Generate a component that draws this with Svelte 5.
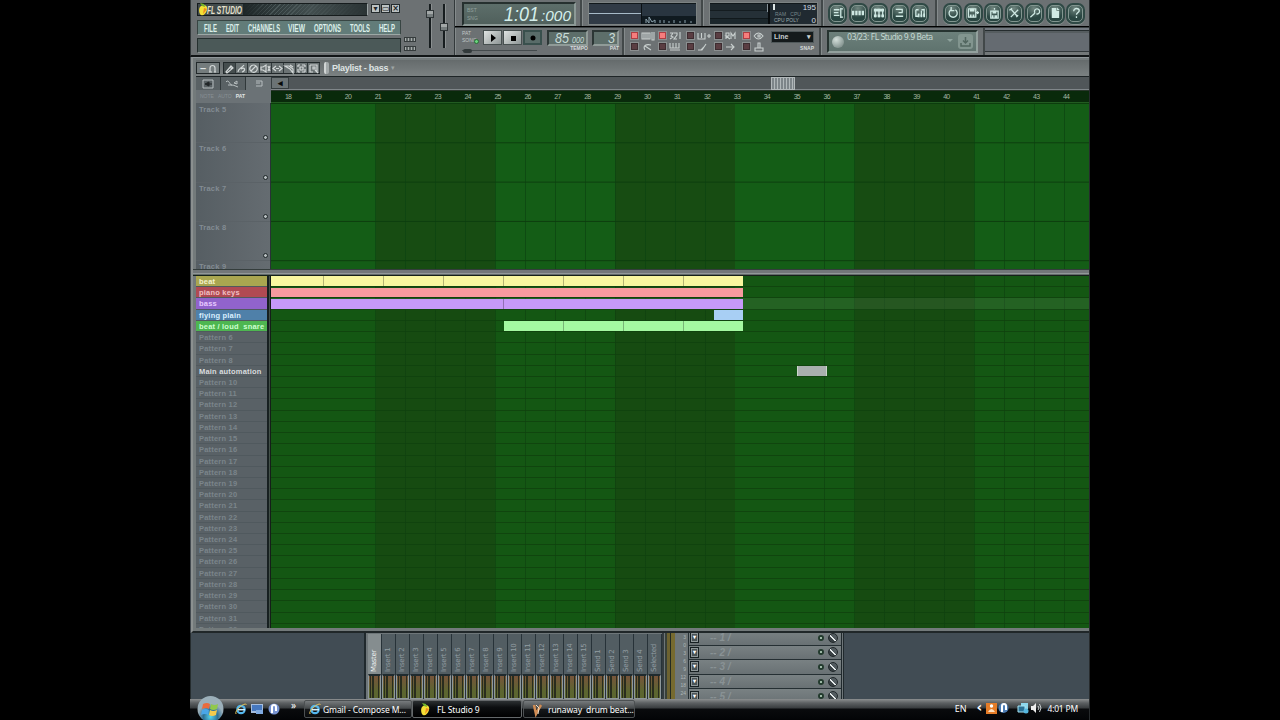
<script>
  const viewIcons = [
    ['M2 3h6M2 6h5M2 9h6M9.500 1v11M10 2h2M10 11h2', ''],
    ['', 'M0 4h2.500v5H0zM3.500 4H6v5H3.500zM7 4h2.500v5H7zM10.500 4H13v5h-2.500z'],
    ['M2.500 2v9M6.500 2v9M10.500 2v9', 'M1 2h11v3H1zM1 8h3v3H1zM5 8h3v3H5zM9 8h3v3H9z'],
    ['M3 2.500h7M6 6h4.500M3 10h8M10 2v4', ''],
    ['M2 3v7h3M5 3H2M8 4v6M11 2v8M8 3h3', 'M4 7h2v4H4zM7 8h2v3H7zM10 7h2v4h-2z']
  ];
  const actionIcons = [
    ['M4 3.200a4.400 4.400 0 1 0 5-.2M4.500 0v4H8', ''],
    ['M1.500 2h8v9h-8zM10 6h3M11.500 4.500v3', 'M3 2h5v3H3zM3 8h2v3H3zM6 8h2v3H6z'],
    ['M3 4.500h8v7.500H3zM7 1v2', 'M5 4h4v3H5zM4 9h2v3H4zM7 9h3v3H7z'],
    ['M3 2l7 8M3 11l8-8M1.500 3.500l3-2M9 11l2-2', ''],
    ['M6.500 6.500a2.800 2.800 0 1 1 1.500 1M6.500 6.500L1.500 11', ''],
    ['', 'M3 1h5v3h3v8H3zM8.700 0.500L11.500 3.300H8.700z'],
    ['M4 4.500c0-4 6-3.500 6-.5 0 2-3 2-3 4.500M7 10v2', '']
  ];
  const toolIcons = [
    'M2 9l5-6 2 2-6 5zM6 4l2 2',
    'M2 9c0-4 3-3 6-7M5 6c4-3 5 2 1 3',
    'M5.5 2a3.7 3.7 0 1 0 .1 0M3 8l5-5',
    'M1 4h2l3-2v7L3 7H1zM8 3l2 5M10 3L8 8',
    'M4 3L1 5.5 4 8M7 3l3 2.500L7 8M4 5.500h3',
    'M1 3h4l4 3v4L6 6zM6 2l3 2',
    'M2 2h2M6 2h3M2 9h2M6 9h3M2 2v2M2 6v3M9 2v2M9 6v3M4 4h3v3H4z',
    'M2 2h7v7M2 2v7h3M5 4h2v2H5zM7 7l3 3'
  ];
  const toggles = [
    [['1', 'M1 2h8v6H1zM3 2v6M5 2v6M7 2v6M11 1v8h2V1'], ['0', 'M4 8c-3-5 2-6 6-5M4 4l6 4']],
    [['1', 'M1 2h3L2 5l2 1-3 2M5 2h3v2L5 8h3M11 1v7'], ['0', 'M1 1v5h9V1M4 1v5M7 1v5M1 8h10']],
    [['0', 'M1 2v6h7V2M4.500 2v5M10 5h4M12 3v4'], ['0', 'M1 8h4l4-6M4 8l3-3']],
    [['0', 'M1 8V2h3v3L1 5l4 3M6 8V2l2 3 2-3v6'], ['0', 'M1 5h8M6 2l3 3-3 3']],
    [['1', 'M1 5c3-4 6-4 9 0-3 4-6 4-9 0M5 4h2v2H5z'], ['0', 'M5 1h2v5H5zM2 6h8v3H2z']]
  ];
  const bars = Array.from({ length: 27 }, (_, i) => i + 18);
  const tracks = [5, 6, 7, 8, 9];
  const named = {
    1: ['beat', '#a9a650', '#f4f3cd'],
    2: ['piano keys', '#b04a53', '#f0c0c4'],
    3: ['bass', '#9163cc', '#e7caff'],
    4: ['flying plain', '#4f80a9', '#d9efff'],
    5: ['beat / loud  snare', '#4eb651', '#cdffd0'],
    9: ['Main automation', '', '#d8dcdf']
  };
  const clips = {
    1: { start: 0, color: '#f8f79f', parts: [53, 60, 60, 60, 60, 60, 60, 59] },
    2: { start: 0, color: '#f89a9f', parts: [472] },
    3: { start: 0, color: '#c699f9', parts: [233, 239] },
    4: { start: 443, color: '#a8cff4', parts: [29] },
    5: { start: 233, color: '#a4f9a1', parts: [60, 60, 60, 59] },
    9: { start: 526, color: '#a9b0ae', parts: [30] }
  };
  const patterns = Array.from({ length: 32 }, (_, i) => i + 1);
  const strips = ['Master', ...Array.from({ length: 15 }, (_, i) => `Insert ${i + 1}`), 'Send 1', 'Send 2', 'Send 3', 'Send 4', 'Selected'];
</script>

{#snippet stretched(text, w, h, size, slant = false, weight = 400)}
  <svg class="st" width={w} height={h} viewBox="0 0 {w} {h}">
    <text x="0" y={h - 1} font-size={size} font-weight={weight} font-style={slant ? 'italic' : 'normal'} textLength={w - 1} lengthAdjust="spacingAndGlyphs">{text}</text>
  </svg>
{/snippet}

{#snippet ie()}
  <svg width="12" height="12" viewBox="0 0 12 12"><circle cx="6" cy="6.500" r="3.700" fill="none" stroke="#54b7ef" stroke-width="2.200" /><path d="M3 6.700h7" stroke="#d6f1ff" stroke-width="1.500" /><path d="M1 11C-1 8 9-1 11.500 1.500" fill="none" stroke="#e7c557" /></svg>
{/snippet}

{#snippet fruit()}
  <svg width="11" height="13" viewBox="0 0 11 13"><path d="M3 3c4-2 7 0 6 4-1 4-4 6-6 5S0 5 3 3z" fill="#f4df35" /><path d="M4 3L2 0l4 1 1 3z" fill="#72b52c" /><path d="M6 5l3 1-4 5z" fill="#f08a20" /></svg>
{/snippet}

<div class="screen">
  <header class="toolbar">
    <section class="main-panel">
      <div class="title-row">
        <div class="title">{@render fruit()}{@render stretched('FL STUDIO', 36, 10, 11.5, true, 700)}<i></i></div>
        <div class="win"><b>▾</b><b>▭</b><b>×</b></div>
      </div>
      <nav>
        {#each [['FILE', 14], ['EDIT', 14], ['CHANNELS', 33], ['VIEW', 18], ['OPTIONS', 28], ['TOOLS', 21], ['HELP', 17]] as [m, w]}
          {@render stretched(m, w, 10, 10.5, false, 700)}
        {/each}
      </nav>
      <div class="hint"></div>
    </section>
    <section class="faders">
      <div class="mini"><b></b><b></b></div>
      <div class="fader f1"><i></i></div>
      <div class="fader f2"><i></i></div>
    </section>
    <section class="transport">
      <div class="row top">
        <div class="cell time"><div class="lcd"><span class="tiny">BST<br />SNG</span>{@render stretched('1:01', 36, 17, 20, true)}{@render stretched(':000', 31, 13, 15, true)}</div></div>
        <div class="cell scope"><div class="dark"><div class="wave"></div><div class="spec"><svg width="54" height="8"><path d="M4 7V3l3 4V1l3 5 3-2v3M18 7V4M22 7V4M27 7V5M32 7V4M38 7V5M43 7V4M49 7V5" stroke="#8ca2ad" fill="none" /></svg></div></div></div>
        <div class="cell cpu"><div class="dark"><div class="graph"></div><div class="nums"><p><i></i>195</p><p class="dim">RAM &nbsp; CPU</p><p><small>CPU POLY</small>0</p></div></div></div>
        <div class="cell round r5">
          {#each viewIcons as [s, f]}<span><svg width="13" height="13" viewBox="0 0 13 13"><path d={s} /><path class="solid" d={f} /></svg></span>{/each}
        </div>
        <div class="cell round r7">
          {#each actionIcons as [s, f]}<span><svg width="13" height="13" viewBox="0 0 13 13"><path d={s} /><path class="solid" d={f} /></svg></span>{/each}
        </div>
      </div>
      <div class="row">
        <div class="cell play">
          <div class="deck">
            <div class="buttons"><span class="mode">PAT <br />SONG<i></i></span><b><svg width="12" height="10"><path d="M4 1l5 4-5 4z" /></svg></b><b><svg width="12" height="10"><path d="M4 3h5v5H4z" /></svg></b><b class="rec"><svg width="12" height="10"><circle cx="6" cy="5" r="2.500" /></svg></b></div>
            <div class="pos"><i></i></div>
          </div>
          <div class="num bpm"><div>{@render stretched('85', 15, 12, 15, true)}{@render stretched('000', 13, 9, 9, true)}</div><em>TEMPO</em></div>
          <div class="num pat"><div>{@render stretched('3', 8, 12, 15, true)}</div><em>PAT</em></div>
        </div>
        <div class="cell options">
          {#each toggles as col}
            <div class="tcol">{#each col as [on, d]}<p><i class:on={on === '1'}></i><svg width="14" height="10"><path {d} /></svg></p>{/each}</div>
          {/each}
          <div class="snap"><div>Line<span>▾</span></div><em>SNAP</em></div>
        </div>
        <div class="cell news"><div><i class="globe"></i><span>03/23: FL Studio 9.9 Beta</span><u></u><svg width="15" height="15"><rect width="15" height="15" rx="3" fill="#82958f" /><path d="M7.500 3v6M5 6.500L7.500 9 10 6.500M3 9v3h9V9" stroke="#52665f" stroke-width="1.500" fill="none" /></svg></div></div>
        <div class="empty"></div>
      </div>
    </section>
  </header>

  <main class="playlist">
    <div class="caption">
      <div class="ctl"><span>–</span><svg width="11" height="11"><path d="M3 9V5a2.500 2.500 0 0 1 5 0v4M2 9h3M7 9h2" /></svg></div>
      <div class="tools">{#each toolIcons as d, i}<span class:sel={i === 0}><svg width="11" height="11"><path {d} /></svg></span>{/each}</div>
      <i class="grip"></i><strong>Playlist - bass</strong><small>▾</small>
    </div>
    <div class="nav">
      <div class="tabs"><span><svg width="12" height="10"><path d="M1 1h10v8H1z" fill="#dfe3e3" stroke="none" /><path d="M3 5l4-2v4zM7 5h3" style="stroke:#202527;fill:#202527" /></svg></span><span><svg width="16" height="10"><path d="M1 3c3-4 4 5 7 3l5 2M3 6h4M9 4l3-2v3z" /></svg></span><span class="act"><svg width="12" height="10"><path d="M3 2h6v5H3M3 4h4" /></svg></span></div>
      <div class="scroll"><b>◂</b><i></i></div>
    </div>
    <div class="ruler">
      <div class="corner"><span>NOTE</span><span>AUTO</span><b>PAT</b></div>
      <div class="bars">{#each bars as b}<span>{b}</span>{/each}</div>
    </div>
    <div class="tracks">
      <div class="heads">{#each tracks as t}<div>Track {t}<i></i></div>{/each}</div>
      <div class="grid big"></div>
    </div>
    <div class="splitter"></div>
    <div class="patterns">
      <div class="names">
        {#each patterns as p}
          <div style:background={named[p]?.[1]} style:color={named[p]?.[2]}>{named[p]?.[0] ?? `Pattern ${p}`}</div>
        {/each}
      </div>
      <div class="strip"></div>
      <div class="grid small">
        {#each patterns as p}
          <div class="prow" class:current={p === 3} class:outlined={p === 9} style:padding-left="{clips[p]?.start ?? 0}px">
            {#if clips[p]}{#each clips[p].parts as w}<i style:width="{w}px" style:background={clips[p].color}></i>{/each}{/if}
          </div>
        {/each}
      </div>
    </div>
  </main>

  <section class="desk">
    <div class="mixer">
      <div class="strips">
        {#each strips as s, i}<div class:master={i === 0}><span>{s}</span><i></i></div>{/each}
      </div>
      <div class="level"></div>
      <div class="scale">3<br />0<br />3<br />6<br />9<br />12<br />18<br />24</div>
      <div class="fx">
        {#each [1, 2, 3, 4, 5] as n}<div><b>▾</b><em>-- {n} /</em><u></u><i></i></div>{/each}
      </div>
    </div>
  </section>

  <footer>
    <div class="start"><svg width="27" height="23" viewBox="0 0 27 23"><defs><radialGradient id="orb" cy=".8"><stop offset="0" stop-color="#58d5ed" /><stop offset=".55" stop-color="#2c7097" /><stop offset="1" stop-color="#9bafb9" /></radialGradient></defs><circle cx="13.500" cy="13" r="13" fill="url(#orb)" /><path d="M6 8q4-2 7 0l-1 5q-3-2-7 0z" fill="#eb6b3c" /><path d="M14 8q3 2 7 0l-1 5q-4 2-7 0z" fill="#91c84b" /><path d="M5 14q4-2 7 0l-1 5q-3-2-7 0z" fill="#4aa6e8" /><path d="M13 14q3 2 7 0l-1 5q-4 2-7 0z" fill="#f4ca4c" /></svg></div>
    <div class="quick">{@render ie()}<svg width="13" height="12"><rect y="1" width="12" height="9" fill="#a5bddd" /><rect x="1" y="2" width="10" height="6" fill="#4678bf" /><path d="M5 7h7v4H5z" fill="#7faae1" /></svg><svg width="12" height="12"><circle cx="6" cy="6" r="5.500" fill="#7894d1" /><path d="M4 10V4a2 2 0 0 1 4 0v4" stroke="#fff" stroke-width="2" fill="none" /></svg></div>
    <span class="more">»</span>
    <div class="task">{@render ie()}<span>Gmail - Compose M...</span></div>
    <div class="task active">{@render fruit()}<span>FL Studio 9</span></div>
    <div class="task third"><svg width="11" height="13"><path d="M2 2l2 9 2-4 3-5" stroke="#d18c53" stroke-width="2.500" fill="none" /><path d="M4 2l3 3-1 6" stroke="#eee0c9" fill="none" /></svg><span>runaway&nbsp; drum beat...</span></div>
    <div class="tray"><span class="en">EN</span><span class="chev">‹</span><svg width="11" height="12"><rect width="11" height="11" y="1" fill="#e57c27" /><circle cx="5.500" cy="4" r="1.700" fill="#fff" /><path d="M2 10q3.500-6 7 0z" fill="#fde0c0" /></svg><svg class="nx" width="11" height="12"><circle cx="5.500" cy="6" r="5" fill="#4d7db4" /><path d="M4 10V4a2 2 0 0 1 4 0v4" stroke="#fff" stroke-width="2" fill="none" /></svg><svg class="net" width="12" height="12"><path d="M4 1h7v6H4z" fill="#8dd7ed" /><path d="M1 4h7v6H1z" fill="#2b7195" stroke="#a8e5f4" /><circle cx="9" cy="9" r="2.500" fill="#56b7df" /></svg><svg width="12" height="12"><path d="M1 4h2l3-3v10L3 8H1z" fill="#ededed" /><path d="M8 4q2 2 0 4M9.500 2q3 4 0 8" stroke="#cfd4d5" fill="none" /></svg><span class="clock">4:01 PM</span></div>
  </footer>
</div>

<style>
  :global(body) { margin: 0; background: #000; }
  * { box-sizing: border-box; }
  svg { display: block; flex: none; overflow: visible; }
  p { margin: 0; }
  em, i { font-style: normal; }
  .screen { width: 900px; height: 720px; margin-left: 190px; overflow: hidden; display: flex; flex-direction: column; background: #41484e; font-family: "Liberation Sans", Arial, sans-serif; border-right: 1px solid #272b2d; }
  .toolbar { height: 57px; flex: none; display: flex; background: #6c7173; border-bottom: 2px solid #111516; border-left: 1px solid #303638; }
  .main-panel { width: 210px; padding: 3px 0 0 6px; }
  .title-row { display: flex; height: 13px; gap: 3px; }
  .title { width: 171px; display: flex; align-items: center; background: #404a4b; border: 1px solid #161c1d; border-right-color: #9ca4a5; }
  .title .st { fill: #e6e0cc; margin-left: -2px; }
  .title i { flex: 1; height: 11px; background: linear-gradient(90deg, #1d2526, #0000 25%, #4b5758aa 55%, #2a3334), repeating-linear-gradient(135deg, #303b3c 0 2px, #4a5758 2px 3px); }
  .win { display: flex; gap: 1px; padding-top: 1px; }
  .win b { width: 9px; height: 9px; font: bold 8px/8px "DejaVu Sans", sans-serif; text-align: center; background: #bcc2c2; border: 1px solid #242b2d; color: #202526; overflow: hidden; }
  nav { height: 15px; margin: 4px 0 3px; display: flex; align-items: center; justify-content: space-between; padding: 0 4px 0 6px; width: 204px; background: #627c79; border: 1px solid #384543; border-bottom-color: #9ca8a5; }
  nav .st { fill: #dcf0eb; }
  .hint { width: 204px; height: 15px; background: #4b5958; border: 1px solid #25302f; border-bottom-color: #899190; }
  .faders { display: flex; width: 53px; padding: 4px 0 0 1px; }
  .mini { width: 20px; padding-top: 33px; display: flex; flex-direction: column; gap: 4px; }
  .mini b { width: 12px; height: 5px; margin-left: 2px; border: 1px solid #353b3c; background: repeating-linear-gradient(90deg, #a7adab 0 1px, #5b6263 1px 3px); }
  .fader { width: 14px; height: 50px; padding-left: 4px; background: linear-gradient(90deg, transparent 5px, #171d1f 5px 7px, #8b9091 7px 8px, transparent 8px) 2px 0/12px 44px no-repeat; }
  .fader i { display: block; width: 8px; height: 8px; margin: 6px 0 0; border: 1px solid #303638; background: linear-gradient(#a3a8a8 45%, #202628 45% 55%, #767d7e 55%); }
  .f2 i { margin-top: 19px; }
  .transport { flex: 1; display: flex; flex-direction: column; border-left: 1px solid #33393b; }
  .row { display: flex; height: 28px; }
  .row.top { border-bottom: 2px groove #3a4042; }
  .cell { display: flex; flex: none; border-right: 2px solid #424849; border-left: 1px solid #858b8c; }
  .time { width: 127px; padding: 2px 4px 1px 6px; }
  .lcd { width: 115px; height: 24px; background: linear-gradient(#5d6e6a, #50605c); border: 2px solid #26302f; border-right-color: #8c9996; border-bottom-color: #8c9996; display: flex; align-items: flex-end; justify-content: flex-end; padding: 0 2px 2px 3px; gap: 1px; }
  .lcd .st { fill: #d5efec; }
  .tiny { font-size: 5px; line-height: 8px; margin-right: auto; color: #92a19e; }
  .scope { width: 121px; padding: 2px 0 0 5px; }
  .dark { display: flex; width: 109px; height: 23px; background: #202a31; border: 1px solid #141b1f; outline: 1px solid #7c8282; outline-offset: -1px; border-top: 2px solid #11181b; }
  .wave { width: 54px; border-right: 1px solid #0b1114; background: linear-gradient(transparent 9px, #a8bbc8 9px 10px, transparent 10px), #313b46; }
  .spec { flex: 1; display: flex; align-items: flex-end; background: linear-gradient(#293540 60%, #101a20 60%); }
  .cpu { width: 120px; padding: 2px 0 0 5px; }
  .graph { width: 60px; border-right: 2px solid #080c0e; background: linear-gradient(90deg, transparent 57px, #87939a 57px) 0 0/100% 8px no-repeat, linear-gradient(#1f292e 6px, #141c20 6px 7px, #253037 7px 14px, #11191c 14px 15px, #1c272c 15px); }
  .nums { flex: 1; font-size: 8px; line-height: 7px; color: #d2dde1; }
  .nums p { display: flex; justify-content: space-between; height: 6.600px; padding-right: 1px; }
  .nums i { width: 2px; height: 6px; margin-left: 3px; background: #dce5e5; }
  .nums .dim { font-size: 5px; color: #78878b; white-space: pre; padding-left: 5px; }
  .nums small { font-size: 5px; color: #9eaaad; padding-left: 4px; }
  .round { gap: 1.500px; align-items: center; }
  .r5 { width: 114px; padding-left: 4px; }
  .r7 { padding-left: 5px; border-right: none; }
  .round span { width: 19px; height: 21px; border-radius: 7px; border: 2px solid #2f4945; outline: 1px solid #829690; outline-offset: -3px; background: radial-gradient(circle at 45% 20%, #70857f, #2a4642 60%); box-shadow: 0 1px 0 #889390; display: grid; place-items: center; }
  .round svg { width: 12px; height: 12px; }
  .round path { fill: none; stroke: #cfe9e3; stroke-width: 1.400; }
  .round .solid { fill: #cfe9e3; stroke: none; }
  .play { width: 169px; padding: 2px 0 0 6px; }
  .deck { width: 85px; }
  .buttons { display: flex; height: 16px; gap: 1px; }
  .buttons b { width: 19px; height: 15px; display: grid; place-items: center; background: linear-gradient(135deg, #dfe3e2, #8e9696); border: 1px solid #475050; }
  .buttons .rec { background: #596c69; border: 2px solid #39504d; }
  .mode { width: 20px; font-size: 5px; line-height: 7px; color: #c0c6c6; position: relative; }
  .mode i { position: absolute; right: 3px; bottom: 2px; width: 5px; height: 5px; border-radius: 50%; background: #69d57d; border: 1px solid #2d6a38; }
  .pos { height: 5px; width: 75px; background: linear-gradient(transparent 4px, #444b4d 4px); }
  .pos i { display: block; width: 9px; height: 4px; margin-left: 1px; border-radius: 2px; background: #323a3b; position: relative; top: 3px; }
  .num { display: flex; flex-direction: column; align-items: flex-end; }
  .num > div { height: 16px; background: #5d6e6a; border: 2px solid #2c3635; border-right-color: #909b98; border-bottom-color: #909b98; display: flex; justify-content: flex-end; align-items: end; gap: 2px; padding-right: 1px; }
  .num .st { fill: #c7dad6; }
  .bpm { width: 41px; }
  .bpm > div { width: 41px; }
  .pat { width: 27px; margin-left: 4px; }
  .pat > div { width: 27px; }
  .num em, .snap em { font-size: 5px; line-height: 5px; font-weight: bold; color: #d5dada; }
  .options { width: 197px; padding: 3px 0 0 5px; }
  .tcol { width: 28px; display: flex; flex-direction: column; gap: 1px; }
  .tcol p { display: flex; gap: 2px; height: 10px; }
  .tcol i { width: 9px; height: 9px; background: #5a3d42; border: 2px solid #3d2c30; outline: 1px solid #8b8f90; outline-offset: -1px; }
  .tcol .on { background: #f67d7d; border-color: #ad3e43; }
  .tcol path { fill: none; stroke: #c9d0cf; stroke-width: 1.100; }
  .snap { text-align: right; margin-left: 1px; }
  .snap div { width: 43px; height: 12px; background: #141a1c; border: 1px solid #50595b; display: flex; justify-content: space-between; padding: 0 2px; font-size: 7px; line-height: 10px; color: #c8d0d1; font-weight: bold; }
  .snap em { display: block; padding: 3px 0 0; }
  .news { width: 164px; padding: 2px 5px; }
  .news > div { width: 151px; height: 23px; background: linear-gradient(#6c807b, #5f736e); border: 2px solid #263330; border-right-color: #92a09d; border-bottom-color: #92a09d; display: flex; align-items: center; padding: 0 3px; }
  .globe { width: 12px; height: 12px; border-radius: 50%; background: radial-gradient(circle at 35% 30%, #d3dfda, #94a39f 60%, #6d7d79); }
  .news span { font: 8px "DejaVu Sans", sans-serif; letter-spacing: -.65px; white-space: nowrap; margin: -8px 0 0 3px; color: #c2d6d0; flex: 1; }
  .news u { border: 3px solid transparent; border-top-color: #8fa39d; margin-right: 5px; }
  .empty { flex: 1; background: linear-gradient(#737980 2px, #252c2e 2px 3px, #565d60 3px 5px, #656b71 5px 23px, #303739 23px 24px, #737879 24px); }

  .playlist { height: 576px; flex: none; margin-left: 1px; border-left: 2px solid #8b9090; border-bottom: 2px solid #202729; background: #737a7b; padding: 2px 0 3px 3px; display: flex; flex-direction: column; border-top: 1px solid #90979a; }
  .caption { height: 16px; display: flex; align-items: center; background: linear-gradient(#656b6c, #7b8182); color: #dfe4e4; }
  .ctl, .tools { display: flex; height: 12px; background: #343b3d; border: 1px solid #22292b; }
  .ctl { width: 24px; gap: 1px; background: #747c7d; font: bold 11px/9px "Liberation Sans", sans-serif; align-items: center; padding-left: 3px; }
  .caption path { fill: none; stroke: #d3d8d8; stroke-width: 1.200; }
  .tools { margin-left: 3px; width: 97px; justify-content: space-between; background: #6b7374; }
  .tools span { width: 12px; border-right: 1px solid #30383a; }
  .tools .sel { background: #454d4e; }
  .grip { width: 5px; height: 12px; margin: 0 3px 0 4px; border-radius: 2px; background: #a3a9aa; border-left: 2px solid #d0d4d4; }
  strong { font-size: 9px; letter-spacing: -.25px; }
  .caption small { font-size: 7px; color: #9da4a4; margin-left: 3px; }
  .nav { height: 14px; display: flex; border-top: 1px solid #1e2527; }
  .tabs { display: flex; width: 75px; }
  .tabs span { width: 25px; border-right: 1px solid #30383a; display: grid; place-items: center; background: #596164; }
  .tabs .act { background: #6b7376; border-right: none; }
  .tabs path { fill: none; stroke: #b7bebf; }
  .scroll { flex: 1; display: flex; background: #505659; border-bottom: 1px solid #80868a; }
  .scroll b { width: 18px; background: #6b7375; border: 1px solid #353d3f; font-size: 9px; line-height: 11px; text-align: center; color: #070909; }
  .scroll i { width: 24px; height: 13px; margin-left: 482px; border: 1px solid #b2b8ba; background: repeating-linear-gradient(90deg, #7d8589 0 2px, #b1b8ba 2px 3px); }
  .ruler { height: 13px; display: flex; }
  .corner { width: 75px; flex: none; background: #6b7276; color: #889095; font-size: 5px; line-height: 13px; display: flex; gap: 4px; padding-left: 4px; }
  .corner b { color: #e0e5e5; }
  .bars { flex: 1; min-width: 0; background: #092a0b; border-bottom: 1px solid #225b21; display: flex; padding-left: 13px; overflow: hidden; border-top: 1px solid #28352a; }
  .bars span { width: 29.930px; flex: none; color: #a3b5a0; font: 7px/12px "Liberation Sans", sans-serif; padding-left: 1px; letter-spacing: -.8px; }
  .tracks { height: 166px; flex: none; display: flex; overflow: hidden; }
  .heads { width: 75px; flex: none; background: linear-gradient(90deg, #565e63, #656c71); border-right: 1px solid #293236; padding-top: 1px; }
  .heads div { height: 39.300px; padding: 0 0 0 3px; font-weight: bold; font-size: 7.500px; line-height: 12px; color: #838c93; border-bottom: 1px solid #5b6267; display: flex; justify-content: space-between; letter-spacing: .2px; }
  .heads i { align-self: flex-end; width: 5px; height: 5px; border-radius: 50%; border: 1px solid #1d2527; background: #b7bec0; margin: 0 2px 2px 0; }
  .grid { flex: 1; min-width: 0; }
  .big { background:
    linear-gradient(transparent 38.300px, #0c3d0d 38.300px) 0 1px/100% 39.300px,
    repeating-linear-gradient(90deg, transparent 0 14.700px, #0b4210aa 14.700px 15.500px, transparent 15.500px 29.930px),
    linear-gradient(90deg, transparent 104.700px, #174c12 104.700px 224.400px, transparent 224.400px 344.200px, #174c12 344.200px 463.900px, transparent 463.900px 583.600px, #174c12 583.600px 703.300px, transparent 703.300px), #145d16; }
  .splitter { height: 7px; flex: none; background: linear-gradient(#343d3c 1px, #727779 1px 4px, #929899 4px 5px, #626b69 5px 6px, #152119 6px); margin-left: -3px; }
  .patterns { flex: 1; display: flex; overflow: hidden; min-height: 0; }
  .names { width: 71px; flex: none; background: #596166; }
  .names div { height: 11.230px; font: bold 7.500px/12.600px "Liberation Sans", sans-serif; color: #7b858b; border-bottom: 1px solid #50595e; padding-left: 3px; white-space: pre; letter-spacing: .2px; }
  .strip { width: 4px; flex: none; background: linear-gradient(90deg, #172021 2px, #435049 2px 3px, #151e19 3px); }
  .small { background:
    repeating-linear-gradient(90deg, transparent 0 14.700px, #0c3d0e88 14.700px 15.500px, transparent 15.500px 29.930px),
    linear-gradient(90deg, transparent 104.700px, #164b11 104.700px 224.400px, transparent 224.400px 344.200px, #164b11 344.200px 463.900px, transparent 463.900px 583.600px, #164b11 583.600px 703.300px, transparent 703.300px), #145713; }
  .prow { height: 11.230px; display: flex; padding-top: .4px; border-bottom: 1px solid #0f410ecc; }
  .prow i { border-right: 1px solid #0004; height: 9.830px; flex: none; }
  .prow i:last-child { border-right: none; }
  .prow.outlined i { border: 1px solid #ccd5cc; border-width: 0 1px 0 1px; }
  .prow.current { background: #ffffff12; }

  .desk { height: 66px; flex: none; background: #414c54; padding-left: 173px; overflow: hidden; border-left: 1px solid #252c2e; }
  .mixer { width: 480px; height: 66px; display: flex; background: #6e7679; border-left: 2px solid #20292d; border-right: 3px double #20292d; padding-left: 2px; }
  .strips { display: flex; width: 296px; border-right: 2px solid #343c3f; padding-top: 1px; }
  .strips div { width: 14.030px; flex: none; display: flex; flex-direction: column; background: #525d62; border-right: 1px solid #273238; }
  .strips span { height: 40px; writing-mode: vertical-rl; transform: rotate(180deg); font: 7px/12px "DejaVu Sans", sans-serif; letter-spacing: -.3px; color: #929da3; white-space: nowrap; padding-top: 2px; width: 13px; }
  .strips .master { background: #858d8f; }
  .master span { color: #f0f3f3; }
  .strips i { flex: 1; border: 1px solid #8e989b; border-top: 2px solid #202b2f; background: linear-gradient(90deg, transparent 1px, #292d1e 1px 2px, transparent 2px 3px, #292d1e 3px 5px, transparent 5px 9px, #292d1e 9px 10px, transparent 10px), linear-gradient(#77543b, #5c6630 70%); }
  .level { width: 10px; background: linear-gradient(90deg, #384039 2px, #6d6230 2px 5px, #242b23 5px 6px, #766a2f 6px 10px); margin-left: 1px; }
  .scale { width: 13px; font-size: 5px; line-height: 8px; color: #adb6b8; text-align: right; overflow: hidden; padding-right: 2px; }
  .fx { flex: 1; border-left: 1px solid #263034; margin-top: -2px; }
  .fx div { height: 14.600px; display: flex; align-items: center; border-bottom: 1px solid #252f33; background: linear-gradient(#798183, #697174); padding-right: 3px; }
  .fx b { width: 9px; height: 11px; margin-left: 1px; font-size: 6px; line-height: 8px; text-align: center; color: #fff; background: #4a5356; border: 1px solid #161f22; outline: 1px solid #8e9799; outline-offset: -2px; }
  .fx em { flex: 1; font: italic bold 10px "Liberation Sans", sans-serif; color: #899295; padding-left: 11px; }
  .fx u { width: 6px; height: 6px; border-radius: 50%; border: 2px solid #223a2d; background: #c5e2cd; margin-right: 4px; }
  .fx i { width: 10px; height: 10px; border-radius: 50%; background: linear-gradient(45deg, #394144 42%, #eff4f4 44% 54%, #535c60 56%); border: 1px solid #22292c; }

  footer { height: 21px; flex: none; display: flex; background: linear-gradient(#8c8f90 0, #5c6062 4px, #383c3e 9px, #090b0d 10px, #030406); color: #fff; font: 8.500px "Noto Sans", sans-serif; letter-spacing: -.1px; }
  .start { width: 45px; padding-left: 7px; margin-top: -3px; }
  .quick { display: flex; align-items: center; gap: 4px; width: 56px; height: 19px; }
  .more { font-size: 10px; line-height: 14px; width: 13px; margin-top: -1px; }
  .task { height: 18px; margin-top: 1px; border: 1px solid #4c5052; border-radius: 2px; background: linear-gradient(#777b7d, #45494b 46%, #17191b 50%, #080a0c); display: flex; align-items: center; padding-left: 4px; gap: 2px; white-space: nowrap; width: 108px; }
  .task.active { width: 110px; background: linear-gradient(#2c3032, #0c0e10 40%, #000); border-color: #64686a; gap: 6px; padding-left: 7px; }
  .task.third { width: 112px; margin-left: 1px; gap: 5px; padding-left: 8px; }
  .tray { flex: 1; height: 18px; display: flex; align-items: center; justify-content: flex-end; padding-right: 11px; }
  .en { margin-right: 10px; font-size: 9px; }
  .chev { width: 10px; font: bold 14px/12px "DejaVu Sans", sans-serif; margin-top: -3px; }
  .nx { margin-left: 1px; }
  .net { margin-left: 8px; margin-right: 1px; }
  .clock { margin-left: 5px; font-size: 8.500px; letter-spacing: -.2px; }
</style>
